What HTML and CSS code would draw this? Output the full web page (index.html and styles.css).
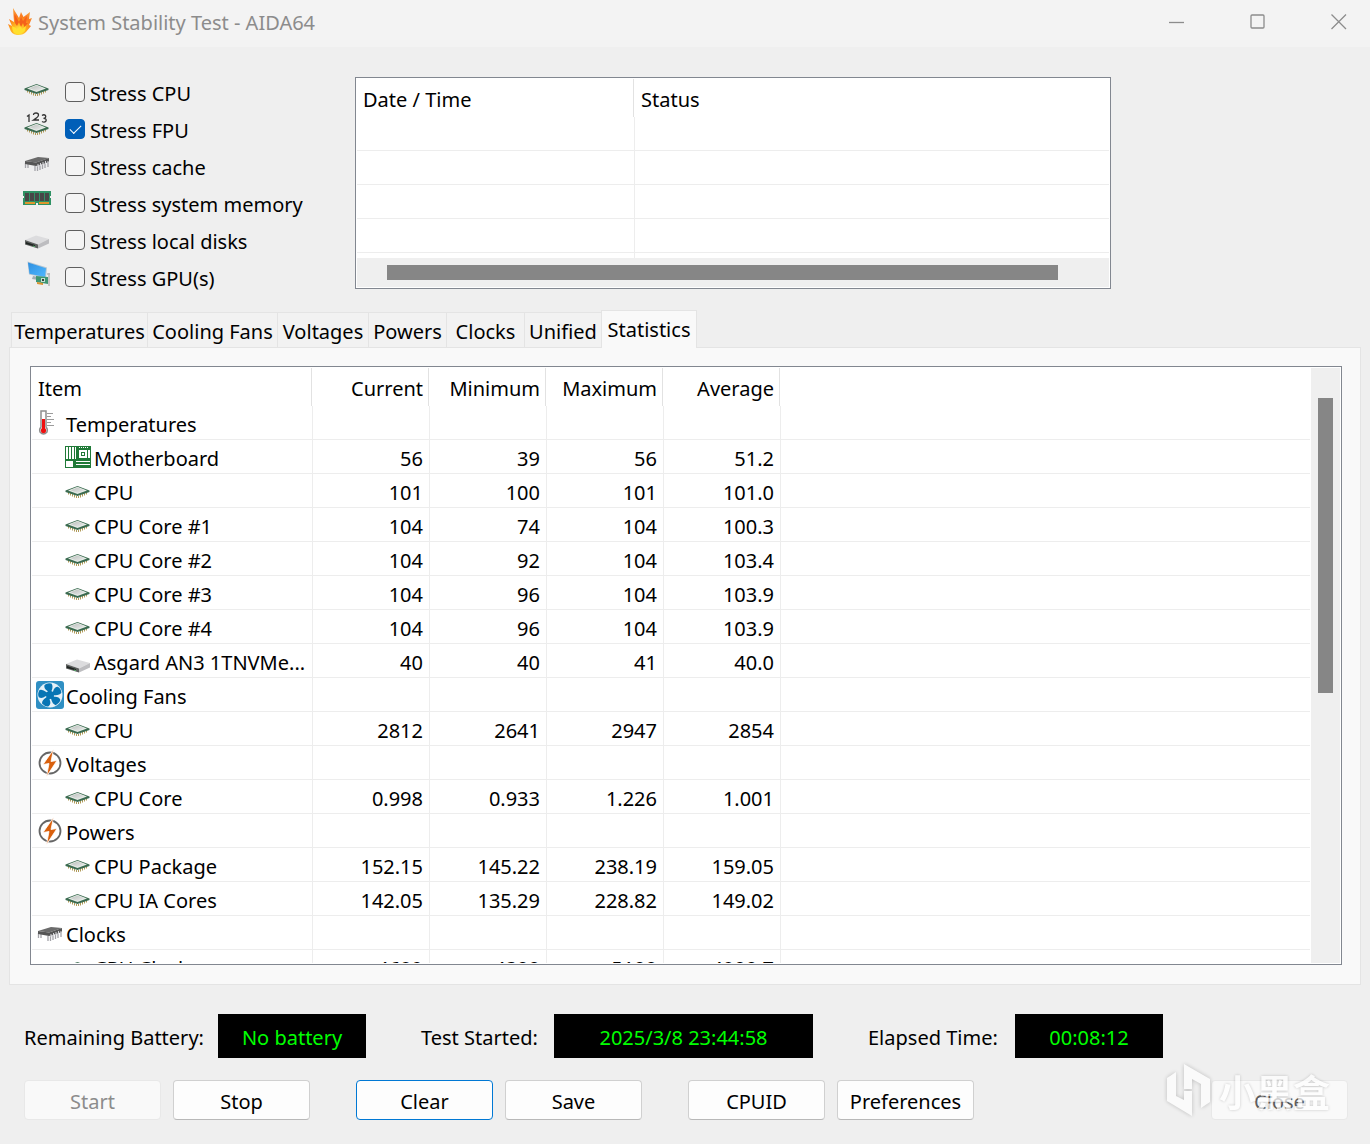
FILE: index.html
```html
<!DOCTYPE html>
<html lang="en">
<head>
	<meta charset="UTF-8">
	<title>System Stability Test - AIDA64</title>
	<link rel="stylesheet" href="styles.css">
</head>
<body>
	<svg class="sprite" aria-hidden="true">
		<defs>
			<linearGradient id="silver" x1="0" y1="0" x2="1" y2="1">
				<stop offset="0" stop-color="#b9bfbb"/>
				<stop offset="1" stop-color="#ececec"/>
			</linearGradient>
			<linearGradient id="screen" x1="0" y1="0" x2="1" y2="1">
				<stop offset="0" stop-color="#2f8fe0"/>
				<stop offset="1" stop-color="#4fb8ff"/>
			</linearGradient>
			<radialGradient id="fire" cx="0.45" cy="0.85" r="0.8">
				<stop offset="0" stop-color="#fff04a"/>
				<stop offset="0.35" stop-color="#ffb01e"/>
				<stop offset="0.7" stop-color="#fb7a1e"/>
				<stop offset="1" stop-color="#f9a03c"/>
			</radialGradient>
		</defs>
		<symbol id="flame" viewBox="0 0 24 28">
			<path fill="url(#fire)" d="M5 0L11 10L13 4L15.500 9L22 4L21 11L24 10L21 17L23 18L18 24Q15 27.500 9 27Q3 26 2 21L0 16L4 18L1 11L6 14Z"/>
			<path fill="#f4611b" d="M6.500 6L11 14L13 9L15 13L19 8L18 15L20 15L16.500 19L15 15L13 19L11 14L9 18L7 15Z"/>
			<path fill="#ffe02d" d="M4 18L8 20L9 22L12 18L14 21L18 18L17 23Q13 27 9 26Q4 25 4 18Z"/>
		</symbol>
		<symbol id="cpu" viewBox="0 0 28 28">
			<path stroke="#b09a58" stroke-width="1" d="M4.500 15v2.500M6.500 16v2.500M8.500 17v2.500M10.500 18v2.500M12.500 19v2M14.500 19v2M16.500 18v2.500M18.500 17v2.500M20.500 16v2.500M22.500 15v2.500"/>
			<path fill="#3b6b50" d="M1.500 13.500L13.500 9L25.500 13.500V15L13.500 19L1.500 15Z"/>
			<path fill="#e6ece7" d="M4 13.400L13.500 9.800L23 13.400L13.500 17Z"/>
			<path fill="url(#silver)" d="M6.500 13.300L13.500 10.500L20.500 13.300L13.500 16Z"/>
		</symbol>
		<symbol id="fpu" viewBox="0 0 28 28">
			<g fill="none" stroke="#333" stroke-width="1.300">
				<path d="M4 4.500L6 3V10"/>
				<path d="M10.500 3Q10.500 1 13 1T15.500 3Q15.500 5 10.500 8H16"/>
				<path d="M19 3.500Q21 2 22.500 3.500Q23.500 6 20.500 6.300Q24 6.500 23 9Q21.500 11 19 9.500"/>
			</g>
			<g transform="translate(0 2)">
				<path stroke="#b09a58" stroke-width="1" d="M4.500 15v2.500M6.500 16v2.500M8.500 17v2.500M10.500 18v2.500M12.500 19v2M14.500 19v2M16.500 18v2.500M18.500 17v2.500M20.500 16v2.500M22.500 15v2.500"/>
				<path fill="#3b6b50" d="M1.500 13.500L13.500 9L25.500 13.500V15L13.500 19L1.500 15Z"/>
				<path fill="#e6ece7" d="M4 13.400L13.500 9.800L23 13.400L13.500 17Z"/>
				<path fill="url(#silver)" d="M6.500 13.300L13.500 10.500L20.500 13.300L13.500 16Z"/>
			</g>
		</symbol>
		<symbol id="chip" viewBox="0 0 28 28">
			<path fill="none" stroke="#a3a3a8" stroke-width="1.300" d="M2.500 14v5M5 15v4M12 17v5M14.500 16v6M17 15v6M19.500 15v5M22 14v5M25 13v5"/>
			<path fill="#6b6b6b" d="M2 12L15 8L26 9L13 13.500Z"/>
			<path fill="#555" d="M2 12L13 13.500V17L2 15ZM13 13.500L26 9V13L13 17Z"/>
			<path stroke="#d8d8dc" stroke-width="1" d="M15 15v3M17.500 14v3M20 13v3M22.500 12v3M25 12v2"/>
		</symbol>
		<symbol id="ram" viewBox="0 0 28 28">
			<path fill="#2f9264" d="M0 5H28V19H0Z"/>
			<path fill="#474747" d="M2 7H6V15H2ZM7 7H11V15H7ZM12 7H16V15H12ZM17 7H21V15H17ZM22 7H26V15H22Z"/>
			<path fill="#de962c" d="M2 16H12V18H2ZM16 16H26V18H16Z"/>
			<path fill="#f0f0f0" d="M13 17H15V19H13ZM0 10H1V12H0ZM27 10H28V12H27Z"/>
		</symbol>
		<symbol id="disk" viewBox="0 0 28 28">
			<path fill="#dcdcde" d="M2 17L13 12.500L26 16L15 21.500Z"/>
			<path fill="#bdbdc0" d="M15 21.500L26 16V20.500L15 25.500Z"/>
			<path fill="#5c5f5e" d="M2 17L15 21.500V25.500L2 21.500Z"/>
			<path fill="#1f2421" d="M3 19L12 22V23.500L3 21Z"/>
			<path stroke="#54b068" stroke-width="1" d="M10 23l2 .6"/>
		</symbol>
		<symbol id="gpu" viewBox="0 0 28 28">
			<path fill="#b5c6d2" d="M4.500 1.500L24 7.500L23 18L6 14.500Z"/>
			<path fill="url(#screen)" d="M5 2.500L23 8.300L22 17L6.500 13.800Z"/>
			<path fill="#a3adb3" d="M10 16L15 17V20L9 19Z"/>
			<path fill="#3f9673" d="M13 16L25 17V24L13 22Z"/>
			<path fill="#bfe0d0" d="M18 18h4v4h-4z"/>
			<path fill="#35403c" d="M19 19h2v2h-2z"/>
			<path fill="#d99432" d="M14 22L20 23V25L14 24Z"/>
			<path stroke="#b8b8b8" stroke-width="1.500" d="M26 13V26M24 14h3"/>
		</symbol>
		<symbol id="thermo" viewBox="0 0 28 28">
			<path fill="#fff" stroke="#8f8f8f" stroke-width="1.500" d="M5 2H10V18Q12 20 11 23Q7.500 27 4 23Q3 20 5 18Z"/>
			<path fill="#f00f0f" d="M6 10H9V19Q11 21 9.500 23.500Q7.500 25 5.500 23.500Q4 21 6 19Z"/>
			<path stroke="#9c9c9c" stroke-width="1" d="M11 4.500H17M11 7.500H15M11 10.500H18M11 13.500H15M11 16.500H18"/>
		</symbol>
		<symbol id="board" viewBox="0 0 28 28">
			<path fill="#207a38" d="M1 3H27V25H1Z"/>
			<path fill="#fff" d="M2 4H4V16H2ZM5 4H7V16H5ZM8 4H10V16H8ZM11 4H12V16H11ZM15 7H23V15H15ZM2 18H9V24H2ZM12 18H26V19H12ZM12 21H26V22H12ZM24 7H26V15H24Z"/>
			<path fill="#207a38" d="M17 9H21V13H17Z"/>
			<path fill="#fff" d="M18 10h2v2h-2z"/>
			<path stroke="#fff" stroke-width="1" stroke-dasharray="1 1" d="M15 4.500H25"/>
		</symbol>
		<symbol id="fan" viewBox="0 0 28 28">
			<rect width="28" height="28" rx="3" fill="#2f8fc3"/>
			<circle cx="14" cy="14" r="12.500" fill="#e6f1f8"/>
			<g fill="#0875b4">
				<path id="blade" d="M14 14L11.500 10Q7.500 7.500 8.500 4Q11 1.500 15.500 2.500Q17.500 5 15.500 10Z"/>
				<use href="#blade" transform="rotate(72 14 14)"/>
				<use href="#blade" transform="rotate(144 14 14)"/>
				<use href="#blade" transform="rotate(216 14 14)"/>
				<use href="#blade" transform="rotate(288 14 14)"/>
				<circle cx="14" cy="14" r="4"/>
			</g>
		</symbol>
		<symbol id="bolt" viewBox="0 0 28 28">
			<circle cx="14" cy="14" r="10.500" fill="#fff" stroke="#666" stroke-width="1.800"/>
			<path fill="#d9600d" stroke="#fff" stroke-width="0.800" d="M17.500 .5L7 15.500L13 14.500L10.500 27.500L21 11.500L15 12.500Z"/>
		</symbol>
	</svg>

	<header class="titlebar">
		<svg class="logo"><use href="#flame"/></svg>
		<h1>System Stability Test - AIDA64</h1>
		<div class="winbtns">
			<button aria-label="Minimize"><svg viewBox="0 0 16 16"><path d="M0 8.500H15"/></svg></button>
			<button aria-label="Maximize"><svg viewBox="0 0 16 16"><rect x="1" y="1" width="13" height="13" rx="1"/></svg></button>
			<button aria-label="Close window"><svg viewBox="0 0 16 16"><path d="M.5 .5L15 15M15 .5L.5 15"/></svg></button>
		</div>
	</header>

	<main>
		<section class="top">
			<ul class="stress">
				<li><svg class="icon"><use href="#cpu"/></svg><label><input type="checkbox">Stress CPU</label></li>
				<li><svg class="icon"><use href="#fpu"/></svg><label><input type="checkbox" checked>Stress FPU</label></li>
				<li><svg class="icon"><use href="#chip"/></svg><label><input type="checkbox">Stress cache</label></li>
				<li><svg class="icon"><use href="#ram"/></svg><label><input type="checkbox">Stress system memory</label></li>
				<li><svg class="icon"><use href="#disk"/></svg><label><input type="checkbox">Stress local disks</label></li>
				<li><svg class="icon"><use href="#gpu"/></svg><label><input type="checkbox">Stress GPU(s)</label></li>
			</ul>
			<div class="listbox log">
				<div class="view">
					<table>
						<colgroup><col class="col-date"><col></colgroup>
						<thead>
							<tr><th>Date / Time</th><th>Status</th></tr>
						</thead>
						<tbody>
							<tr><td></td><td></td></tr>
							<tr><td></td><td></td></tr>
							<tr><td></td><td></td></tr>
							<tr><td></td><td></td></tr>
							<tr><td></td><td></td></tr>
						</tbody>
					</table>
				</div>
				<div class="hscroll"><div class="thumb"></div></div>
			</div>
		</section>

		<nav class="tabs">
			<button>Temperatures</button>
			<button>Cooling Fans</button>
			<button>Voltages</button>
			<button>Powers</button>
			<button>Clocks</button>
			<button>Unified</button>
			<button class="active">Statistics</button>
		</nav>

		<section class="panel">
			<div class="listbox stats">
				<div class="view">
					<table>
						<colgroup><col class="col-item"><col class="col-num"><col class="col-num"><col class="col-num"><col class="col-num"><col></colgroup>
						<thead>
							<tr><th>Item</th><th>Current</th><th>Minimum</th><th>Maximum</th><th>Average</th><th></th></tr>
						</thead>
						<tbody>
							<tr><td><div class="item"><svg class="icon"><use href="#thermo"/></svg>Temperatures</div></td><td></td><td></td><td></td><td></td><td></td></tr>
							<tr><td><div class="item sub"><svg class="icon"><use href="#board"/></svg>Motherboard</div></td><td>56</td><td>39</td><td>56</td><td>51.2</td><td></td></tr>
							<tr><td><div class="item sub"><svg class="icon"><use href="#cpu"/></svg>CPU</div></td><td>101</td><td>100</td><td>101</td><td>101.0</td><td></td></tr>
							<tr><td><div class="item sub"><svg class="icon"><use href="#cpu"/></svg>CPU Core #1</div></td><td>104</td><td>74</td><td>104</td><td>100.3</td><td></td></tr>
							<tr><td><div class="item sub"><svg class="icon"><use href="#cpu"/></svg>CPU Core #2</div></td><td>104</td><td>92</td><td>104</td><td>103.4</td><td></td></tr>
							<tr><td><div class="item sub"><svg class="icon"><use href="#cpu"/></svg>CPU Core #3</div></td><td>104</td><td>96</td><td>104</td><td>103.9</td><td></td></tr>
							<tr><td><div class="item sub"><svg class="icon"><use href="#cpu"/></svg>CPU Core #4</div></td><td>104</td><td>96</td><td>104</td><td>103.9</td><td></td></tr>
							<tr><td><div class="item sub"><svg class="icon"><use href="#disk"/></svg>Asgard AN3 1TNVMe...</div></td><td>40</td><td>40</td><td>41</td><td>40.0</td><td></td></tr>
							<tr><td><div class="item"><svg class="icon"><use href="#fan"/></svg>Cooling Fans</div></td><td></td><td></td><td></td><td></td><td></td></tr>
							<tr><td><div class="item sub"><svg class="icon"><use href="#cpu"/></svg>CPU</div></td><td>2812</td><td>2641</td><td>2947</td><td>2854</td><td></td></tr>
							<tr><td><div class="item"><svg class="icon"><use href="#bolt"/></svg>Voltages</div></td><td></td><td></td><td></td><td></td><td></td></tr>
							<tr><td><div class="item sub"><svg class="icon"><use href="#cpu"/></svg>CPU Core</div></td><td>0.998</td><td>0.933</td><td>1.226</td><td>1.001</td><td></td></tr>
							<tr><td><div class="item"><svg class="icon"><use href="#bolt"/></svg>Powers</div></td><td></td><td></td><td></td><td></td><td></td></tr>
							<tr><td><div class="item sub"><svg class="icon"><use href="#cpu"/></svg>CPU Package</div></td><td>152.15</td><td>145.22</td><td>238.19</td><td>159.05</td><td></td></tr>
							<tr><td><div class="item sub"><svg class="icon"><use href="#cpu"/></svg>CPU IA Cores</div></td><td>142.05</td><td>135.29</td><td>228.82</td><td>149.02</td><td></td></tr>
							<tr><td><div class="item"><svg class="icon"><use href="#chip"/></svg>Clocks</div></td><td></td><td></td><td></td><td></td><td></td></tr>
							<tr><td><div class="item sub"><svg class="icon"><use href="#cpu"/></svg>CPU Clock</div></td><td>4689</td><td>4300</td><td>5100</td><td>4900.7</td><td></td></tr>
						</tbody>
					</table>
				</div>
				<div class="vscroll"><div class="thumb"></div></div>
			</div>
		</section>

		<section class="status">
			<div class="battery"><span>Remaining Battery:</span><output>No battery</output></div>
			<div class="started"><span>Test Started:</span><output>2025/3/8 23:44:58</output></div>
			<div class="elapsed"><span>Elapsed Time:</span><output>00:08:12</output></div>
		</section>
	</main>

	<footer class="buttons">
		<div class="group">
			<button disabled>Start</button>
			<button>Stop</button>
		</div>
		<div class="group">
			<button class="focus">Clear</button>
			<button>Save</button>
		</div>
		<div class="group">
			<button>CPUID</button>
			<button>Preferences</button>
		</div>
		<button class="close" disabled>Close</button>
		<div class="watermark" lang="zh">
			<svg viewBox="0 0 46 56"><path d="M2 15L11 9V33L19 37V28H27V53L2 38ZM19 1L45 16V39L36 45V21L27 16V26H19Z"/></svg>
			<span>小黑盒</span>
		</div>
	</footer>
</body>
</html>
```

FILE: styles.css
```css
*{box-sizing: border-box;}
body,h1,ul,li{
	margin: 0;
	padding: 0;
}
body{
	display: flex;
	flex-direction: column;
	height: 100vh;
	background: #efefef;
	color: #000;
	font: 20px/30px "Noto Sans","Open Sans",sans-serif;
}
button{
	font: inherit;
	color: inherit;
}
.sprite{
	position: absolute;
	width: 0;
	height: 0;
}
.icon{
	flex: none;
	width: 28px;
	height: 28px;
}

/* title bar */
.titlebar{
	display: flex;
	align-items: flex-start;
	height: 47px;
	padding-left: 8px;
	background: #f3f3f3;
	color: #8c8c8c;
}
.logo{
	width: 24px;
	height: 28px;
	margin: 8px 6px 0 0;
}
.titlebar h1{
	font-size: 20px;
	font-weight: normal;
	line-height: 46px;
}
.winbtns{
	display: flex;
	margin-left: auto;
}
.winbtns button{
	width: 81px;
	height: 44px;
	padding: 0 0 0 18px;
	border: 0;
	background: none;
}
.winbtns svg{
	display: block;
	width: 16px;
	height: 16px;
	margin: 0 auto;
	fill: none;
	stroke: #8c8c8c;
	stroke-width: 1.3;
}

main{
	flex: 1;
	display: flex;
	flex-direction: column;
	min-height: 0;
}
.top{
	display: flex;
	padding: 27px 23px 0;
}
.stress{
	width: 332px;
	list-style: none;
}
.stress li{
	display: flex;
	height: 37px;
	padding-top: 1px;
}
.stress label{
	display: flex;
	margin-left: 14px;
	line-height: 37px;
}
.stress input{
	appearance: none;
	width: 20px;
	height: 20px;
	margin: 7px 5px 0 0;
	border: 1px solid #5f5f5f;
	border-radius: 4px;
	background: #f4f4f4;
}
.stress input:checked{
	border-color: #005fb8;
	background: #005fb8;
}
.stress input:checked::before{
	content: "";
	display: block;
	width: 10px;
	height: 5px;
	margin: 5px 0 0 4px;
	border: solid #fff;
	border-width: 0 0 1px 1px;
	transform: rotate(-45deg);
}

/* list boxes */
.listbox{
	display: flex;
	padding: 1px;
	border: 1px solid #828790;
	background: #fff;
}
.view{
	flex: 1;
	min-width: 0;
	min-height: 0;
	overflow: hidden;
}
table{
	width: 100%;
	table-layout: fixed;
	border-collapse: separate;
	border-spacing: 0;
}
th{
	height: 38px;
	padding: 4px 7px 0 6px;
	background: linear-gradient(#e2e2e2,#e2e2e2) right 1px top/1px 100% no-repeat;
	font-weight: normal;
	line-height: 34px;
	text-align: left;
}
td{
	height: 34px;
	padding: 4px 6px 0;
	border-right: 1px solid #ededed;
	border-bottom: 1px solid #ededed;
	line-height: 29px;
	white-space: nowrap;
}
th:last-child{background: none;}
td:last-child{border-right: 0;}
.thumb{background: #868686;}
.log{
	flex: 0 1 756px;
	flex-direction: column;
	height: 212px;
	margin-top: 3px;
}
.col-date{width: 278px;}
.hscroll{
	height: 29px;
	padding: 7px 51px 7px 30px;
	background: #efefef;
}
.hscroll .thumb{height: 15px;}

/* tabs */
.tabs{
	display: grid;
	grid-template-columns: 136px 130px 91px 78px 78px 77px 96px;
	align-items: end;
	padding-left: 11px;
	margin-top: 14px;
}
.tabs button{
	height: 35px;
	padding: 4px 0 0;
	border: solid #e4e4e4;
	border-width: 1px 0 0 1px;
	background: #f2f2f2;
}
.tabs .active{
	height: 38px;
	margin-bottom: -1px;
	padding: 0;
	border-width: 1px 1px 0;
	background: #f9f9f9;
	z-index: 1;
}
.panel{
	flex: 1;
	display: flex;
	min-height: 0;
	margin: 0 9px;
	padding: 18px 18px 19px 20px;
	border: 1px solid #e4e4e4;
	background: #f9f9f9;
}
.stats{flex: 1;}
.col-item{width: 281px;}
.col-num{width: 117px;}
.stats th:not(:first-child),
.stats td:not(:first-child){text-align: right;}
.stats td:first-child{padding: 3px 0 0 4px;}
.item{
	display: flex;
	gap: 2px;
	height: 30px;
	line-height: 32px;
}
.item.sub{padding-left: 28px;}
.vscroll{
	width: 29px;
	margin-left: 1px;
	padding: 30px 7px 0;
	background: #efefef;
}
.vscroll .thumb{height: 295px;}

/* status line */
.status{
	display: flex;
	gap: 55px;
	padding: 29px 24px 22px;
}
.status div{
	display: flex;
	justify-content: space-between;
	height: 44px;
	line-height: 48px;
	white-space: nowrap;
}
.battery{width: 342px;}
.started{width: 392px;}
.elapsed{width: 295px;}
.status output{
	width: 148px;
	height: 44px;
	background: #000;
	color: #00ff00;
	text-align: center;
}
.status .started output{width: 259px;}

/* buttons */
.buttons{
	position: relative;
	display: flex;
	gap: 46px;
	padding: 0 22px 24px 24px;
}
.group{
	display: flex;
	gap: 12px;
}
.buttons button{
	width: 137px;
	height: 40px;
	padding: 3px 0 0;
	border: 1px solid #d0d0d0;
	border-bottom-color: #b8b8b8;
	border-radius: 4px;
	background: #fdfdfd;
}
.buttons .focus{border-color: #0078d4;}
.buttons button:disabled{
	border-color: #e8e8e8;
	background: #f9f9f9;
	color: #8c8c8c;
}
.buttons .close{margin-left: auto;}
.buttons .close:disabled{color: #606060;}
.watermark{
	position: absolute;
	right: 40px;
	bottom: 25px;
	display: flex;
	align-items: center;
	gap: 8px;
	color: #fff;
	font: bold 37px/56px "Noto Sans CJK SC",sans-serif;
	text-shadow: 0 0 3px rgba(0,0,0,.3);
	opacity: .7;
	pointer-events: none;
}
.watermark svg{
	width: 46px;
	height: 56px;
	fill: #fff;
	filter: drop-shadow(0 0 2px rgba(0,0,0,.3));
}
```
